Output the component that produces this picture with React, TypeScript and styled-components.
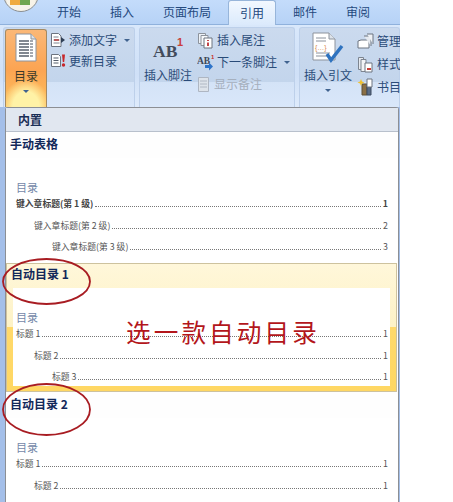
import React from "react";
import styled, { createGlobalStyle } from "styled-components";

const Global = createGlobalStyle`
  html, body { margin: 0; padding: 0; background: #fff; }
  body { font-family: "Noto Sans CJK SC", "Liberation Sans", sans-serif; }
`;

const Page = styled.div`
  position: relative;
  width: 400px;
  height: 502px;
  overflow: hidden;
  display: flex;
  flex-direction: column;
  background: #a4bfe9;
`;

const TabBar = styled.div`
  position: relative;
  height: 25px;
  flex: none;
  display: flex;
  padding-left: 42.5px;
  background: linear-gradient(180deg, #c4dcfb 0%, #b6d2f6 100%);
  border-bottom: 1px solid #8fb1dc;
  box-sizing: border-box;
`;

const OfficeOrb = styled.div`
  position: absolute;
  left: 3px;
  top: -24px;
  width: 34px;
  height: 34px;
  border-radius: 50%;
  background: radial-gradient(circle at 50% 72%, #f7f3e8 0 46%, #a9a9a4 72%, #e7ecf0 100%);
  border: 1px solid #8b8f92;
  overflow: hidden;
`;

const OrbMark = styled.div`
  position: absolute;
  left: 6px;
  bottom: 6px;
  width: 10px;
  height: 6px;
  background: #efaa3e;
  box-shadow: 10px 0 0 0 #6fa64f;
`;

const Tab = styled.div<{ $active?: boolean }>`
  height: ${(p) => (p.$active ? "25px" : "24px")};
  flex: none;
  padding: 3px 14.5px 0;
  box-sizing: border-box;
  font-size: 12px;
  line-height: 17px;
  color: #24497e;
  white-space: nowrap;
  ${(p) =>
    p.$active &&
    `
    position: relative;
    z-index: 1;
    padding: 3px 11px 0;
    margin: 0 2.5px;
    border: 1px solid #97b5da;
    border-bottom: none;
    border-radius: 3px 3px 0 0;
    background: linear-gradient(180deg, #f2f8ff 0%, #dbeafc 100%);
  `}
`;

const Ribbon = styled.div`
  height: 82px;
  flex: none;
  display: flex;
  gap: 4px;
  padding: 2px 0 0 3px;
  box-sizing: border-box;
  background: linear-gradient(180deg, #d9e8fb 0%, #cfe0f7 60%, #dfebfb 100%);
`;

const Group = styled.div<{ $w: number }>`
  width: ${(p) => p.$w}px;
  flex: none;
  display: flex;
  box-sizing: border-box;
  padding: 1px 0 0 1px;
  border: 1px solid #bdd0ea;
  border-bottom: none;
  border-radius: 3px 3px 0 0;
  background: linear-gradient(180deg, #cbdaee 0%, #c3d5ec 68%, #d4e3f7 69%, #d9e7fa 100%);
`;

const LargeButton = styled.div<{ $w: number; $active?: boolean }>`
  width: ${(p) => p.$w}px;
  flex: none;
  display: flex;
  flex-direction: column;
  align-items: center;
  box-sizing: border-box;
  padding-top: 3px;
  font-size: 12px;
  color: #2a4b78;
  ${(p) =>
    p.$active &&
    `
    color: #3a3a2a;
    border: 1px solid #a58a62;
    border-bottom: none;
    border-radius: 3px 3px 0 0;
    background:
      radial-gradient(ellipse 24px 28px at 50% 100%, #fff2a6 0 55%, rgba(255,225,120,0) 100%),
      linear-gradient(180deg, #fbb877 0%, #fba452 52%, #fdc15e 100%);
  `}
`;

const LargeIcon = styled.div`
  height: 31px;
  display: flex;
  align-items: flex-start;
  justify-content: center;
`;

const LargeLabel = styled.div`
  margin-top: 3px;
  line-height: 17px;
  white-space: nowrap;
`;

const Caret = styled.span`
  display: inline-block;
  width: 0;
  height: 0;
  border-left: 3px solid transparent;
  border-right: 3px solid transparent;
  border-top: 3px solid #40638f;
  margin-top: 6px;
`;

const SmallCol = styled.div<{ $gap: number; $left: number; $top?: number }>`
  display: flex;
  flex-direction: column;
  gap: ${(p) => p.$gap}px;
  padding: ${(p) => p.$top ?? 2}px 0 0 ${(p) => p.$left}px;
`;

const SmallItem = styled.div<{ $off?: boolean }>`
  height: 18px;
  display: flex;
  align-items: center;
  gap: 3px;
  font-size: 12px;
  line-height: 18px;
  white-space: nowrap;
  color: ${(p) => (p.$off ? "#a5afbd" : "#2a4b78")};
`;

const InlineCaret = styled(Caret)`
  margin: 0 0 0 4px;
`;

const Lower = styled.div`
  flex: 1;
  display: flex;
  padding-left: 5px;
  min-height: 0;
`;

const Menu = styled.div`
  flex: 1;
  min-width: 0;
  margin-right: 1px;
  background: #fefefe;
  border: 1px solid #8c8f94;
  border-bottom: none;
  border-radius: 3px 3px 0 0;
  display: flex;
  flex-direction: column;
`;

const MenuHeader = styled.div`
  height: 24px;
  flex: none;
  box-sizing: border-box;
  padding-left: 12px;
  background: #e1e7f0;
  border-bottom: 1px solid #b8c0cc;
  font-size: 12px;
  font-weight: 700;
  line-height: 24px;
  color: #1b2f57;
`;

const Section = styled.div<{ $hover?: boolean; $h: number }>`
  height: ${(p) => p.$h}px;
  flex: none;
  box-sizing: border-box;
  display: flex;
  flex-direction: column;
  padding-top: ${(p) => (p.$hover ? 0 : 2)}px;
  ${(p) =>
    p.$hover &&
    `
    margin-right: 1px;
    border: 1px solid #cdc29e;
    background: linear-gradient(180deg, #fff7da 0%, #fdf2c6 50%, #ffd96b 50%, #ffd763 100%);
  `}
`;

const SectionTitle = styled.div`
  height: 24px;
  flex: none;
  box-sizing: border-box;
  padding-left: 4px;
  font-size: 12px;
  font-weight: 700;
  line-height: 19px;
  color: #12285a;
`;

const Preview = styled.div<{ $hover?: boolean }>`
  flex: 1;
  min-height: 0;
  overflow: hidden;
  display: flex;
  flex-direction: column;
  padding: 21px ${(p) => (p.$hover ? "2px" : "10px")} 0 ${(p) => (p.$hover ? "3px" : "10px")};
  margin: ${(p) => (p.$hover ? "0 6px 5px 6px" : "0")};
  background: #fff;
`;

const TocHeading = styled.div`
  height: 19px;
  flex: none;
  font-size: 11px;
  line-height: 17px;
  color: #7488a8;
`;

const TocRow = styled.div<{ $level: number; $strong?: boolean }>`
  height: 21.5px;
  flex: none;
  display: flex;
  align-items: flex-start;
  box-sizing: border-box;
  padding-left: ${(p) => p.$level * 18}px;
  font-size: 8.8px;
  line-height: 12px;
  color: ${(p) => (p.$strong ? "#444" : "#555")};
  font-weight: ${(p) => (p.$strong ? 600 : 400)};
  white-space: nowrap;
`;

const Leader = styled.span`
  flex: 1;
  height: 8px;
  margin: 0 2px;
  border-bottom: 1px dotted #777;
`;

const Overlay = styled.svg`
  position: absolute;
  left: 0;
  top: 0;
  pointer-events: none;
`;

const Callout = styled.div`
  position: absolute;
  left: 126px;
  top: 312px;
  font-size: 24.6px;
  line-height: 38px;
  letter-spacing: 3.1px;
  color: #b3161b;
  white-space: nowrap;
`;

const Doc = ({ w = 22, h = 29 }: { w?: number; h?: number }) => (
  <svg width={w} height={h} viewBox="0 0 22 29">
    <path d="M1 1h15l5 5v22H1z" fill="#fff" stroke="#8d939c" />
    <path d="M16 1v5h5" fill="#dde3ea" stroke="#8d939c" />
    {[8, 11, 14, 17, 20, 23].map((y) => (
      <g key={y}>
        <path d={`M4 ${y}h10`} stroke="#4b5360" strokeWidth="1.4" />
        <path d={`M15 ${y}h3`} stroke="#7d8590" strokeWidth="1.4" />
      </g>
    ))}
  </svg>
);

const AddTextIcon = () => (
  <svg width="16" height="16" viewBox="0 0 16 16">
    <path d="M1.500 1.500h7l2.500 2.500v10.500h-9.500z" fill="#fff" stroke="#6d7480" />
    <path d="M3.500 5h5M3.500 8h6M3.500 11h6" stroke="#7d8590" />
    <path d="M4 8h5" stroke="#b33a3a" strokeWidth="1.500" />
    <path d="M11 5l4 3-4 3z" fill="#2f3f55" />
  </svg>
);

const UpdateIcon = () => (
  <svg width="16" height="16" viewBox="0 0 16 16">
    <path d="M1.500 1.500h7l2 2v10h-9z" fill="#fff" stroke="#6d7480" />
    <path d="M3.500 5h5M3.500 7.500h5M3.500 10h5" stroke="#555e6b" />
    <path d="M12 1.500h3l-.8 7.500h-1.400z" fill="#c8272b" />
    <circle cx="13.500" cy="12" r="1.700" fill="#c8272b" />
  </svg>
);

const EndnoteIcon = () => (
  <svg width="17" height="17" viewBox="0 0 17 17">
    <path d="M1.500 1.500h7v10h-7z" fill="#eef2f7" stroke="#8d939c" />
    <path d="M4 3.500h7v10H4z" fill="#f7f9fb" stroke="#8d939c" />
    <path d="M7 6h8v10H7z" fill="#fff" stroke="#6d7480" />
    <path d="M11 8v1M11 10.500v3.500" stroke="#b3161b" strokeWidth="1.600" />
  </svg>
);

const NextNoteIcon = () => (
  <svg width="17" height="17" viewBox="0 0 17 17">
    <text x="0" y="10" fontFamily="Liberation Serif, serif" fontSize="9.500" fontWeight="700" fill="#3c4656">AB</text>
    <text x="14" y="5" fontFamily="Liberation Sans, sans-serif" fontSize="6" fontWeight="700" fill="#c9322f">1</text>
    <path d="M8 11h4V8.500l4 4-4 4V14H8z" fill="#2e74c9" />
  </svg>
);

const ShowNotesIcon = () => (
  <svg width="14" height="17" viewBox="0 0 14 17">
    <path d="M1.500 1.500h10v14h-10z" fill="#dde3ea" stroke="#aeb6c2" />
    <path d="M3 5h7M3 8h7M3 11h7" stroke="#b0b8c4" />
  </svg>
);

const FootnoteIcon = () => (
  <svg width="32" height="28" viewBox="0 0 32 28">
    <text x="1" y="25" fontFamily="Liberation Serif, serif" fontSize="17.500" fontWeight="700" fill="#434c5c">AB</text>
    <text x="25" y="14" fontFamily="Liberation Sans, sans-serif" fontSize="11" fontWeight="700" fill="#c8403a">1</text>
  </svg>
);

const CitationIcon = () => (
  <svg width="32" height="31" viewBox="0 0 32 31">
    <path d="M1 1h16l6 6v21H1z" fill="#fff" stroke="#8d939c" />
    <path d="M17 1v6h6" fill="#dde3ea" stroke="#8d939c" />
    <path d="M4 6h10M4 9h10M4 21h14M4 24h14" stroke="#8b929c" />
    <text x="3" y="18" fontFamily="Liberation Sans, sans-serif" fontSize="7" fill="#d98a4a">{"{\u2026}"}</text>
    <path d="M15 22l4 6 11-14" fill="none" stroke="#2f73bf" strokeWidth="3.400" />
  </svg>
);

const ManageIcon = () => (
  <svg width="17" height="17" viewBox="0 0 17 17">
    <path d="M1 15V8l3-1h8v8z" fill="#fff" stroke="#6d7480" />
    <path d="M7 3h7v10" fill="#e5e9ef" stroke="#6d7480" />
    <path d="M10 1h6v10" fill="#eef1f5" stroke="#6d7480" />
  </svg>
);

const StyleIcon = () => (
  <svg width="17" height="17" viewBox="0 0 17 17">
    <path d="M1.500 1.500h5v12h-5z" fill="#e5e9ef" stroke="#7d8590" />
    <path d="M4 3.500h5v12H4z" fill="#f2f4f7" stroke="#7d8590" />
    <path d="M8 7h7v9H8z" fill="#fff" stroke="#6d7480" />
    <path d="M10 13h4" stroke="#c8403a" strokeWidth="2" />
  </svg>
);

const BiblioIcon = () => (
  <svg width="17" height="18" viewBox="0 0 17 18">
    <path d="M5 6h5v11H5z" fill="#8a6f45" stroke="#5f5136" />
    <path d="M10 6h4v11h-4z" fill="#5a6c86" stroke="#3d4a5f" />
    <path d="M10 1h5v8h-5z" fill="#fff" stroke="#6d7480" />
    <path d="M4 1l1 2.500 2.500 1-2.500 1L4 8 3 5.500.5 4.500l2.500-1z" fill="#f0c230" />
  </svg>
);

const tocRows = (labels: string[], nums: string[], strongFirst?: boolean) =>
  labels.map((l, i) => (
    <TocRow key={l} $level={i} $strong={strongFirst && i === 0}>
      <span>{l}</span>
      <Leader />
      <span>{nums[i]}</span>
    </TocRow>
  ));

export default function App() {
  return (
    <Page>
      <Global />
      <TabBar>
        <OfficeOrb>
          <OrbMark />
        </OfficeOrb>
        <Tab>开始</Tab>
        <Tab>插入</Tab>
        <Tab>页面布局</Tab>
        <Tab $active>引用</Tab>
        <Tab>邮件</Tab>
        <Tab>审阅</Tab>
      </TabBar>
      <Ribbon>
        <Group $w={132}>
          <LargeButton $w={42} $active>
            <LargeIcon>
              <Doc />
            </LargeIcon>
            <LargeLabel>目录</LargeLabel>
            <Caret />
          </LargeButton>
          <SmallCol $gap={3} $left={3}>
            <SmallItem>
              <AddTextIcon />
              添加文字
              <InlineCaret />
            </SmallItem>
            <SmallItem>
              <UpdateIcon />
              更新目录
            </SmallItem>
          </SmallCol>
        </Group>
        <Group $w={156}>
          <LargeButton $w={54}>
            <LargeIcon>
              <FootnoteIcon />
            </LargeIcon>
            <LargeLabel>插入脚注</LargeLabel>
          </LargeButton>
          <SmallCol $gap={4} $left={2}>
            <SmallItem>
              <EndnoteIcon />
              插入尾注
            </SmallItem>
            <SmallItem>
              <NextNoteIcon />
              下一条脚注
              <InlineCaret />
            </SmallItem>
            <SmallItem $off>
              <ShowNotesIcon />
              显示备注
            </SmallItem>
          </SmallCol>
        </Group>
        <Group $w={101}>
          <LargeButton $w={54}>
            <LargeIcon>
              <CitationIcon />
            </LargeIcon>
            <LargeLabel>插入引文</LargeLabel>
            <Caret />
          </LargeButton>
          <SmallCol $gap={5} $left={2} $top={3}>
            <SmallItem>
              <ManageIcon />
              管理
            </SmallItem>
            <SmallItem>
              <StyleIcon />
              样式
            </SmallItem>
            <SmallItem>
              <BiblioIcon />
              书目
            </SmallItem>
          </SmallCol>
        </Group>
      </Ribbon>
      <Lower>
        <Menu>
          <MenuHeader>内置</MenuHeader>
          <Section $h={131}>
            <SectionTitle>手动表格</SectionTitle>
            <Preview>
              <TocHeading>目录</TocHeading>
              {tocRows(["键入章标题(第 1 级)", "键入章标题(第 2 级)", "键入章标题(第 3 级)"], ["1", "2", "3"], true)}
            </Preview>
          </Section>
          <Section $h={129} $hover>
            <SectionTitle>自动目录 1</SectionTitle>
            <Preview $hover>
              <TocHeading>目录</TocHeading>
              {tocRows(["标题 1", "标题 2", "标题 3"], ["1", "1", "1"])}
            </Preview>
          </Section>
          <Section $h={112}>
            <SectionTitle>自动目录 2</SectionTitle>
            <Preview>
              <TocHeading>目录</TocHeading>
              {tocRows(["标题 1", "标题 2"], ["1", "1"])}
            </Preview>
          </Section>
        </Menu>
      </Lower>
      <Overlay width="400" height="502" viewBox="0 0 400 502">
        <ellipse cx="46.500" cy="281.500" rx="43.500" ry="22.500" fill="none" stroke="#a81c22" strokeWidth="1.800" />
        <ellipse cx="46.500" cy="409.500" rx="43.500" ry="25.500" fill="none" stroke="#a81c22" strokeWidth="1.800" />
      </Overlay>
      <Callout>选一款自动目录</Callout>
    </Page>
  );
}
